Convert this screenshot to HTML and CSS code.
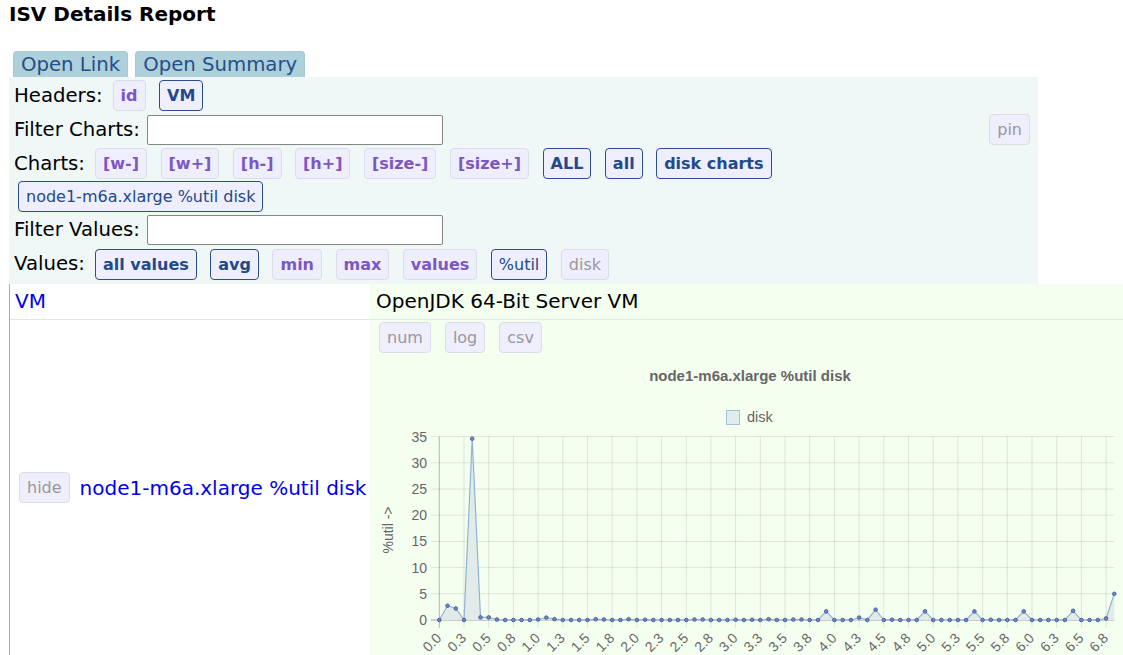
FILE: index.html
```html
<!DOCTYPE html>
<html>
<head>
<meta charset="utf-8">
<title>ISV Details Report</title>
<link rel="stylesheet" href="styles.css">
</head>
<body>
<h1 class="title">ISV Details Report</h1>
<div class="tabs">
  <button class="tab">Open Link</button>
  <button class="tab">Open Summary</button>
</div>
<div class="panel">
  <div class="row r1">
    <span class="lbl">Headers:</span>
    <button class="btn off">id</button>
    <button class="btn on">VM</button>
  </div>
  <div class="row r2">
    <span class="lbl">Filter Charts:</span>
    <input class="filter" type="text">
    <button class="btn dis pin">pin</button>
  </div>
  <div class="row charts">
    <span class="lbl">Charts:</span>
    <button class="btn off">[w-]</button>
    <button class="btn off">[w+]</button>
    <button class="btn off">[h-]</button>
    <button class="btn off">[h+]</button>
    <button class="btn off">[size-]</button>
    <button class="btn off">[size+]</button>
    <button class="btn on">ALL</button>
    <button class="btn on">all</button>
    <button class="btn on">disk charts</button>
    <button class="btn sel">node1-m6a.xlarge %util disk</button>
  </div>
  <div class="row r4">
    <span class="lbl">Filter Values:</span>
    <input class="filter" type="text">
  </div>
  <div class="row r5">
    <span class="lbl">Values:</span>
    <button class="btn on">all values</button>
    <button class="btn on">avg</button>
    <button class="btn off">min</button>
    <button class="btn off">max</button>
    <button class="btn off">values</button>
    <button class="btn sel">%util</button>
    <button class="btn dis">disk</button>
  </div>
</div>
<table class="data">
  <colgroup><col class="ck"><col class="cv"></colgroup>
  <tr class="vmrow">
    <td class="k"><a class="lnk">VM</a></td>
    <td class="v">OpenJDK 64-Bit Server VM</td>
  </tr>
  <tr class="chartrow">
    <td class="k">
      <div class="hl">
        <button class="btn dis">hide</button>
        <a class="lnk">node1-m6a.xlarge %util disk</a>
      </div>
    </td>
    <td class="v">
      <div class="tools">
        <button class="btn dis">num</button>
        <button class="btn dis">log</button>
        <button class="btn dis">csv</button>
      </div>
      <svg class="chart" width="748" height="299" viewBox="0 0 748 299" xmlns="http://www.w3.org/2000/svg">
        <defs>
          <marker id="dot" markerWidth="6" markerHeight="6" refX="3" refY="3" markerUnits="userSpaceOnUse">
            <circle cx="3" cy="3" r="1.8" fill="#7388c4" stroke="#3f5699" stroke-width="0.9"/>
          </marker>
        </defs>
        <text class="ctitle" x="374" y="25" text-anchor="middle">node1-m6a.xlarge %util disk</text>
        <rect x="350.5" y="54.5" width="13" height="14" fill="#e3ecec" stroke="#a3c2d8" stroke-width="1"/>
        <text class="clegend" x="371" y="66">disk</text>
        <path d="M55 264H738.3M55 237.8H738.3M55 211.6H738.3M55 185.4H738.3M55 159.2H738.3M55 133H738.3M55 106.8H738.3M55 80.6H738.3" stroke="rgba(0,0,0,0.1)" stroke-width="1" fill="none"/>
        <path d="M88 80.6V272M112.7 80.6V272M137.4 80.6V272M162.1 80.6V272M186.8 80.6V272M211.5 80.6V272M236.2 80.6V272M260.9 80.6V272M285.6 80.6V272M310.3 80.6V272M334.9 80.6V272M359.6 80.6V272M384.3 80.6V272M409 80.6V272M433.7 80.6V272M458.4 80.6V272M483.1 80.6V272M507.8 80.6V272M532.5 80.6V272M557.2 80.6V272M581.9 80.6V272M606.6 80.6V272M631.3 80.6V272M656 80.6V272M680.7 80.6V272M705.4 80.6V272M730.1 80.6V272" stroke="rgba(0,0,0,0.1)" stroke-width="1" fill="none"/>
        <path d="M63.3 80.6V272M55 264H738.3" stroke="rgba(0,0,0,0.28)" stroke-width="1" fill="none"/>
        <g class="yt" text-anchor="end">
          <text x="51" y="269">0</text>
          <text x="51" y="242.8">5</text>
          <text x="51" y="216.6">10</text>
          <text x="51" y="190.4">15</text>
          <text x="51" y="164.2">20</text>
          <text x="51" y="138">25</text>
          <text x="51" y="111.8">30</text>
          <text x="51" y="85.6">35</text>
        </g>
        <text class="yt" transform="translate(17,174) rotate(-90)" text-anchor="middle">%util -&gt;</text>
        <polygon fill="#e1ebe9" points="63.3,264 71.5,249.7 79.8,252.5 88,264 96.2,82.7 104.5,261.4 112.7,261.4 120.9,263.5 129.2,264 137.4,264 145.6,264 153.8,264 162.1,263.5 170.3,261.6 178.5,263.2 186.8,264 195,264 203.2,264 211.5,264 219.7,263.2 227.9,263.5 236.2,264 244.4,264 252.6,263.2 260.9,264 269.1,263.7 277.3,264 285.6,264 293.8,264 302,264 310.3,264 318.5,263.5 326.7,263.5 334.9,264 343.2,264 351.4,264 359.6,263.7 367.9,264 376.1,263.7 384.3,264 392.6,263.2 400.8,264 409,264 417.3,263.5 425.5,263.5 433.7,264 442,264 450.2,255.4 458.4,264 466.7,264 474.9,264 483.1,261.6 491.3,264 499.6,253.7 507.8,264 516,263.7 524.3,264 532.5,264 540.7,264 549,255.4 557.2,264 565.4,264 573.7,264 581.9,264 590.1,264 598.4,255.4 606.6,264 614.8,263.7 623.1,264 631.3,264 639.5,264 647.7,255.4 656,264 664.2,264 672.4,264 680.7,264 688.9,264 697.1,254.8 705.4,264 713.6,264 721.8,264 730.1,262.4 738.3,237.8 738.3,264"/>
        <polyline fill="none" stroke="#8fb3d3" stroke-width="1.2" marker-start="url(#dot)" marker-mid="url(#dot)" marker-end="url(#dot)" points="63.3,264 71.5,249.7 79.8,252.5 88,264 96.2,82.7 104.5,261.4 112.7,261.4 120.9,263.5 129.2,264 137.4,264 145.6,264 153.8,264 162.1,263.5 170.3,261.6 178.5,263.2 186.8,264 195,264 203.2,264 211.5,264 219.7,263.2 227.9,263.5 236.2,264 244.4,264 252.6,263.2 260.9,264 269.1,263.7 277.3,264 285.6,264 293.8,264 302,264 310.3,264 318.5,263.5 326.7,263.5 334.9,264 343.2,264 351.4,264 359.6,263.7 367.9,264 376.1,263.7 384.3,264 392.6,263.2 400.8,264 409,264 417.3,263.5 425.5,263.5 433.7,264 442,264 450.2,255.4 458.4,264 466.7,264 474.9,264 483.1,261.6 491.3,264 499.6,253.7 507.8,264 516,263.7 524.3,264 532.5,264 540.7,264 549,255.4 557.2,264 565.4,264 573.7,264 581.9,264 590.1,264 598.4,255.4 606.6,264 614.8,263.7 623.1,264 631.3,264 639.5,264 647.7,255.4 656,264 664.2,264 672.4,264 680.7,264 688.9,264 697.1,254.8 705.4,264 713.6,264 721.8,264 730.1,262.4 738.3,237.8"/>
        <g class="yt" text-anchor="end">
          <text transform="translate(66.3,283) rotate(-45)">0.0</text>
          <text transform="translate(91,283) rotate(-45)">0.3</text>
          <text transform="translate(115.7,283) rotate(-45)">0.5</text>
          <text transform="translate(140.4,283) rotate(-45)">0.8</text>
          <text transform="translate(165.1,283) rotate(-45)">1.0</text>
          <text transform="translate(189.8,283) rotate(-45)">1.3</text>
          <text transform="translate(214.5,283) rotate(-45)">1.5</text>
          <text transform="translate(239.2,283) rotate(-45)">1.8</text>
          <text transform="translate(263.9,283) rotate(-45)">2.0</text>
          <text transform="translate(288.6,283) rotate(-45)">2.3</text>
          <text transform="translate(313.3,283) rotate(-45)">2.5</text>
          <text transform="translate(337.9,283) rotate(-45)">2.8</text>
          <text transform="translate(362.6,283) rotate(-45)">3.0</text>
          <text transform="translate(387.3,283) rotate(-45)">3.3</text>
          <text transform="translate(412,283) rotate(-45)">3.5</text>
          <text transform="translate(436.7,283) rotate(-45)">3.8</text>
          <text transform="translate(461.4,283) rotate(-45)">4.0</text>
          <text transform="translate(486.1,283) rotate(-45)">4.3</text>
          <text transform="translate(510.8,283) rotate(-45)">4.5</text>
          <text transform="translate(535.5,283) rotate(-45)">4.8</text>
          <text transform="translate(560.2,283) rotate(-45)">5.0</text>
          <text transform="translate(584.9,283) rotate(-45)">5.3</text>
          <text transform="translate(609.6,283) rotate(-45)">5.5</text>
          <text transform="translate(634.3,283) rotate(-45)">5.8</text>
          <text transform="translate(659,283) rotate(-45)">6.0</text>
          <text transform="translate(683.7,283) rotate(-45)">6.3</text>
          <text transform="translate(708.4,283) rotate(-45)">6.5</text>
          <text transform="translate(733.1,283) rotate(-45)">6.8</text>
        </g>
      </svg>
    </td>
  </tr>
</table>
</body>
</html>
```
FILE: styles.css
```css
html, body {
  font-family: "DejaVu Sans", sans-serif;
  font-size: 19.7px;
  color: #000;
}
body {
  margin: 0 0 0 8px;
  background: #fff;
}
.title {
  font-size: 20px;
  font-weight: bold;
  line-height: 24px;
  margin: 2px 0 0 1px;
}
.tabs {
  display: flex;
  gap: 7px;
  margin: 25px 0 0 5px;
}
.tab {
  font-family: "DejaVu Sans", sans-serif;
  font-size: 19.7px;
  line-height: 24px;
  height: 26px;
  box-sizing: border-box;
  padding: 0 7px;
  color: #244f8a;
  background: #aed0da;
  border: 1px solid #a7c9d3;
  border-bottom: none;
  border-radius: 4px 4px 0 0;
}
.panel {
  background: #eff7f7;
  width: 1029px;
  box-sizing: border-box;
  padding: 2px 0 3px 5px;
  margin-left: 1px;
}
.row {
  display: flex;
  align-items: center;
  column-gap: 5.5px;
  min-height: 33px;
}
.row.r2 { min-height: 35px; }
.row.charts {
  flex-wrap: wrap;
  max-width: 975px;
}
.row.r4, .row.r5 { min-height: 34px; }
.lbl {
  line-height: 24px;
  white-space: nowrap;
  margin-right: 0.5px;
}
.btn {
  font-family: "DejaVu Sans", sans-serif;
  font-size: 16px;
  line-height: 19px;
  height: 31px;
  box-sizing: border-box;
  padding: 5px 7px;
  margin: 1px 4px;
  border: 1px solid #dcdce8;
  border-radius: 4px;
  background: #eeeefc;
  white-space: nowrap;
}
.btn.on {
  font-weight: bold;
  color: #22498a;
  border-color: #2b4f8e;
}
.btn.sel {
  color: #22498a;
  border-color: #2b4f8e;
}
.btn.off {
  font-weight: bold;
  color: #7c56c3;
}
.btn.dis {
  color: #999;
}
.btn.pin {
  margin-left: auto;
  margin-right: 8px;
}
.filter {
  width: 296px;
  height: 30px;
  box-sizing: border-box;
  margin: 0 0 0 1px;
  border: 1px solid #858585;
  border-radius: 2px;
  background: #fff;
}
.data {
  border-collapse: separate;
  border-spacing: 0;
  table-layout: fixed;
  width: 1114px;
  margin-left: 1px;
  border-left: 1px solid #a9a9a9;
  font-size: 20px;
}
.ck { width: 360px; }
.cv { width: 753px; }
.data td {
  padding: 0;
}
.vmrow td {
  line-height: 35px;
  border-bottom: 1px solid #e4e6e4;
  vertical-align: middle;
}
.vmrow td.k { padding-left: 5px; }
.vmrow td.v { padding-left: 6px; }
.data td.v { background: #f5fff0; }
.chartrow td.k {
  vertical-align: middle;
  padding-left: 5px;
}
.chartrow td.v {
  vertical-align: top;
  padding-left: 5px;
}
.hl {
  display: flex;
  align-items: center;
  column-gap: 6px;
}
.hl .btn { margin: 0 4px; }
.lnk {
  color: #0000ee;
  text-decoration: none;
  white-space: nowrap;
}
.tools {
  display: flex;
  column-gap: 6px;
  padding-top: 2px;
}
.tools .btn { margin: 0 4px; }
.chart {
  display: block;
  margin: 3px 0 0 1px;
  overflow: visible;
}
.ctitle {
  font-family: "Liberation Sans", Arial, sans-serif;
  font-size: 15px;
  font-weight: bold;
  fill: #666;
}
.clegend {
  font-family: "Liberation Sans", Arial, sans-serif;
  font-size: 14.5px;
  fill: #666;
}
.yt {
  font-family: "Liberation Sans", Arial, sans-serif;
  font-size: 14px;
  fill: #666;
}
```
